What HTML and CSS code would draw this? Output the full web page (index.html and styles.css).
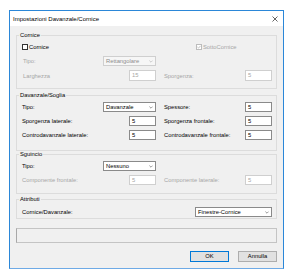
FILE: index.html
```html
<!DOCTYPE html>
<html lang="it">
<head>
    <meta charset="UTF-8">
    <title>Impostazioni Davanzale/Cornice</title>
    <link rel="stylesheet" href="styles.css">
</head>
<body>
    <div class="window">
        <div class="titlebar">
            <span class="title">Impostazioni Davanzale/Cornice</span>
            <svg class="close" width="6" height="6" viewBox="0 0 6 6"><path d="M0.5 0.5L5.5 5.5M5.5 0.5L0.5 5.5" stroke="#222" stroke-width="0.7"/></svg>
        </div>

        <div class="dialog">
            <fieldset class="group group-cornice">
                <legend>Cornice</legend>
                <div class="row row-check">
                    <div class="cell cell-start">
                        <span class="check"></span>
                        <span class="check-label">Cornice</span>
                    </div>
                    <div class="cell cell-start">
                        <span class="check check-off sub-check">
                            <svg width="4" height="4" viewBox="0 0 4 4"><path d="M0.4 2L1.5 3.1L3.6 0.8" fill="none" stroke="#a8a8a8" stroke-width="0.7"/></svg>
                        </span>
                        <span class="check-label muted">SottoCornice</span>
                    </div>
                </div>
                <div class="row">
                    <div class="cell">
                        <span class="label muted indent">Tipo:</span>
                        <span class="combo combo-off">Rettangolare<svg width="4" height="3" viewBox="0 0 4 3"><path d="M0.4 0.6L2 2.2L3.6 0.6" fill="none" stroke="#b0b0b0" stroke-width="0.6"/></svg></span>
                    </div>
                    <div class="cell"></div>
                </div>
                <div class="row row-tall">
                    <div class="cell">
                        <span class="label muted indent">Larghezza</span>
                        <span class="edit edit-tall edit-off">15</span>
                    </div>
                    <div class="cell">
                        <span class="label muted">Sporgenza:</span>
                        <span class="edit edit-tall edit-off">5</span>
                    </div>
                </div>
            </fieldset>

            <fieldset class="group group-davanzale">
                <legend>Davanzale/Soglia</legend>
                <div class="row">
                    <div class="cell">
                        <span class="label">Tipo:</span>
                        <span class="combo">Davanzale<svg width="4" height="3" viewBox="0 0 4 3"><path d="M0.4 0.6L2 2.2L3.6 0.6" fill="none" stroke="#555" stroke-width="0.6"/></svg></span>
                    </div>
                    <div class="cell">
                        <span class="label">Spessore:</span>
                        <span class="edit">5</span>
                    </div>
                </div>
                <div class="row">
                    <div class="cell">
                        <span class="label">Sporgenza laterale:</span>
                        <span class="edit">5</span>
                    </div>
                    <div class="cell">
                        <span class="label">Sporgenza frontale:</span>
                        <span class="edit">5</span>
                    </div>
                </div>
                <div class="row">
                    <div class="cell">
                        <span class="label">Controdavanzale laterale:</span>
                        <span class="edit">5</span>
                    </div>
                    <div class="cell">
                        <span class="label">Controdavanzale frontale:</span>
                        <span class="edit">5</span>
                    </div>
                </div>
            </fieldset>

            <fieldset class="group group-sguincio">
                <legend>Sguincio</legend>
                <div class="row">
                    <div class="cell">
                        <span class="label">Tipo:</span>
                        <span class="combo">Nessuno<svg width="4" height="3" viewBox="0 0 4 3"><path d="M0.4 0.6L2 2.2L3.6 0.6" fill="none" stroke="#555" stroke-width="0.6"/></svg></span>
                    </div>
                    <div class="cell"></div>
                </div>
                <div class="row">
                    <div class="cell">
                        <span class="label muted">Componente frontale:</span>
                        <span class="edit edit-off">5</span>
                    </div>
                    <div class="cell">
                        <span class="label muted">Componente laterale:</span>
                        <span class="edit edit-off">5</span>
                    </div>
                </div>
            </fieldset>

            <fieldset class="group group-attributi">
                <legend>Attributi</legend>
                <div class="row row-short">
                    <div class="cell">
                        <span class="label">Cornice/Davanzale:</span>
                    </div>
                    <div class="cell cell-end">
                        <span class="combo combo-wide">Finestre-Cornice<svg width="4" height="3" viewBox="0 0 4 3"><path d="M0.4 0.6L2 2.2L3.6 0.6" fill="none" stroke="#555" stroke-width="0.6"/></svg></span>
                    </div>
                </div>
            </fieldset>

            <div class="status"></div>

            <div class="buttons">
                <button class="btn btn-default">OK</button>
                <button class="btn">Annulla</button>
            </div>
        </div>
    </div>
</body>
</html>
```

FILE: styles.css
```css
body {
    margin: 0;
    background-color: #fff;
    font-family: 'Liberation Sans', Arial, sans-serif;
    font-size: 5.8px;
    color: #000;
}
.window {
    box-sizing: border-box;
    width: 275px;
    margin: 10px 0 0 9px;
    border: 1px solid #2b87d8;
    border-bottom-color: #6eaae6;
    background-color: #f0f0f0;
}
.titlebar {
    height: 15px;
    display: flex;
    align-items: center;
    justify-content: space-between;
    padding: 0 5px 0 3px;
    background-color: #fff;
    font-size: 6px;
}
.close {
    display: block;
}
.dialog {
    padding: 6px;
}
.group {
    margin: 0;
    padding: 0 4px 0 5px;
    border: 1px solid #dcdcdc;
    min-width: 0;
}
.group legend {
    margin-left: -3px;
    padding: 0 1px;
    height: 7px;
    line-height: 7px;
}
.group-cornice {
    padding-top: 1px;
    padding-bottom: 5px;
}
.group-davanzale {
    margin-top: 3px;
    padding-top: 1px;
    padding-bottom: 8px;
}
.group-sguincio {
    padding-top: 1px;
    padding-bottom: 6px;
}
.group-attributi {
    margin-top: 2px;
    padding-top: 4px;
    padding-bottom: 1px;
}
.row {
    display: grid;
    grid-template-columns: 134px 108px;
    column-gap: 8px;
    height: 14px;
    align-items: center;
}
.row-tall {
    height: 15px;
}
.row-short {
    height: 10px;
}
.cell {
    display: flex;
    align-items: center;
    justify-content: space-between;
}
.cell-start {
    justify-content: flex-start;
}
.cell-end {
    justify-content: flex-end;
}
.label {
    white-space: nowrap;
}
.indent {
    padding-left: 1px;
}
.muted {
    color: #a6a6a6;
}
.check {
    box-sizing: border-box;
    display: flex;
    align-items: center;
    justify-content: center;
    width: 6px;
    height: 6px;
    border: 1px solid #333;
    background-color: #fff;
}
.check-off {
    border-color: #bcbcbc;
}
.sub-check {
    margin-left: 32px;
}
.check-label {
    margin-left: 1px;
}
.edit,
.combo {
    box-sizing: border-box;
    height: 10px;
    border: 1px solid #8a8a8a;
    background-color: #fff;
    line-height: 8px;
    white-space: nowrap;
}
.edit {
    width: 27px;
    padding-left: 2px;
}
.edit-tall {
    height: 11px;
    line-height: 9px;
}
.edit-off {
    border-color: #cfcfcf;
    color: #a6a6a6;
}
.combo {
    display: flex;
    align-items: center;
    justify-content: space-between;
    width: 53px;
    padding: 0 2px;
}
.combo-off {
    border-color: #cfcfcf;
    background-color: #f6f6f6;
    color: #8c8c8c;
}
.combo-wide {
    width: 77px;
}
.status {
    box-sizing: border-box;
    height: 15px;
    margin-top: 9px;
    border: 1px solid #c4c4c4;
    border-left-color: #a8a8a8;
}
.buttons {
    display: flex;
    justify-content: flex-end;
    gap: 9px;
    margin-top: 8px;
}
.btn {
    box-sizing: border-box;
    width: 39px;
    height: 11px;
    padding: 0;
    border: 1px solid #adadad;
    background-color: #e1e1e1;
    font-family: inherit;
    font-size: 5.8px;
    line-height: 9px;
    color: #000;
}
.btn-default {
    border-color: #0078d7;
}
```
